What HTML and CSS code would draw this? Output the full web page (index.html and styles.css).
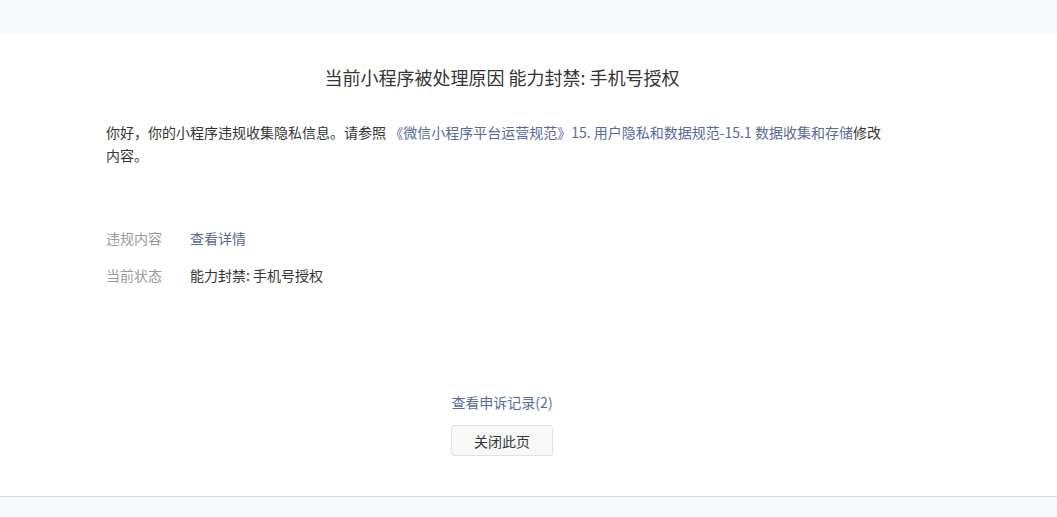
FILE: index.html
```html
<!DOCTYPE html>
<html lang="zh-CN">
<head>
<meta charset="utf-8">
<title>处理原因</title>
<link rel="stylesheet" href="styles.css">
</head>
<body>
<div class="topbar"></div>
<div class="page">
  <div class="content">
    <h1 class="title">当前小程序被处理原因 能力封禁: 手机号授权</h1>
    <p class="desc">你好，你的小程序违规收集隐私信息。请参照 <a class="link" href="#">《微信小程序平台运营规范》15. 用户隐私和数据规范-15.1 数据收集和存储</a>修改内容。</p>
    <div class="info">
      <div class="row"><span class="label">违规内容</span><a class="link" href="#">查看详情</a></div>
      <div class="row"><span class="label">当前状态</span><span class="value">能力封禁: 手机号授权</span></div>
    </div>
    <div class="actions">
      <a class="link" href="#">查看申诉记录(2)</a>
      <button class="btn" type="button">关闭此页</button>
    </div>
  </div>
</div>
</body>
</html>
```
FILE: styles.css
```css
html, body {
  margin: 0;
  padding: 0;
}
body {
  background: #f7f8fa;
  font-family: "Noto Sans CJK SC", "Noto Sans", sans-serif;
  color: #353535;
  font-size: 14px;
}
.topbar {
  height: 33px;
}
.page {
  background: #fff;
  height: 464px;
  box-sizing: border-box;
  border-bottom: 1px solid #dcdcdc;
  box-shadow: 0 1px 2px rgba(0, 0, 0, 0.04);
}
.content {
  margin-left: 106px;
  width: 792px;
  padding-top: 32px;
}
.title {
  margin: 0;
  font-size: 18px;
  font-weight: normal;
  line-height: 24px;
  text-align: center;
  color: #353535;
}
.desc {
  margin: 32px 0 0;
  max-width: 782px;
  line-height: 23px;
  font-size: 14px;
}
.link {
  color: #576b95;
  text-decoration: none;
}
.info {
  margin-top: 61px;
  display: flex;
  flex-direction: column;
  gap: 17px;
}
.row {
  display: flex;
  line-height: 20px;
}
.label {
  width: 84px;
  color: #9a9a9a;
}
.actions {
  margin-top: 107px;
  display: flex;
  flex-direction: column;
  align-items: center;
  gap: 13px;
  line-height: 20px;
}
.btn {
  width: 102px;
  height: 31px;
  background: #f8f8f8;
  border: 1px solid #e2e2e2;
  border-radius: 3px;
  font-family: inherit;
  font-size: 14px;
  color: #353535;
  padding: 0;
}
```
